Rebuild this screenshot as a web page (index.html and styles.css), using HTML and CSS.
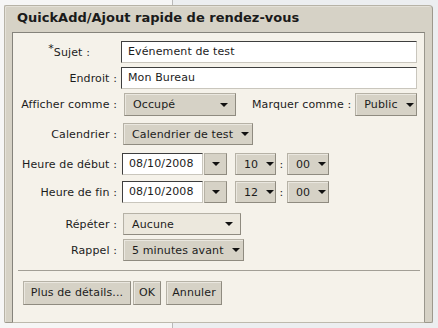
FILE: index.html
```html
<!DOCTYPE html>
<html lang="fr">
<head>
<meta charset="utf-8">
<title>QuickAdd</title>
<link rel="stylesheet" href="styles.css">
</head>
<body>
<div class="dialog">
  <div class="title">QuickAdd/Ajout rapide de rendez-vous</div>
  <div class="panel">
    <div class="row r1">
      <span class="lbl lbl-sujet"><sup class="req">*</sup>Sujet :</span>
      <span class="input wide">Evénement de test</span>
    </div>
    <div class="row r2">
      <span class="lbl">Endroit :</span>
      <span class="input wide">Mon Bureau</span>
    </div>
    <div class="row r3">
      <span class="lbl">Afficher comme :</span>
      <span class="select w-show">Occupé<i class="arr"></i></span>
      <span class="mark">Marquer comme :</span>
      <span class="select w-pub">Public<i class="arr"></i></span>
    </div>
    <div class="row r4">
      <span class="lbl">Calendrier :</span>
      <span class="select w-cal">Calendrier de test<i class="arr"></i></span>
    </div>
    <div class="row r5">
      <span class="lbl">Heure de début :</span>
      <span class="input date">08/10/2008</span>
      <span class="dbtn"><i class="arr"></i></span>
      <span class="select w-h">10<i class="arr"></i></span>
      <span class="colon">:</span>
      <span class="select w-m">00<i class="arr"></i></span>
    </div>
    <div class="row r6">
      <span class="lbl">Heure de fin :</span>
      <span class="input date">08/10/2008</span>
      <span class="dbtn"><i class="arr"></i></span>
      <span class="select w-h">12<i class="arr"></i></span>
      <span class="colon">:</span>
      <span class="select w-m">00<i class="arr"></i></span>
    </div>
    <div class="row r7">
      <span class="lbl">Répéter :</span>
      <span class="select w-rep light">Aucune<i class="arr"></i></span>
    </div>
    <div class="row r8">
      <span class="lbl">Rappel :</span>
      <span class="select w-rap">5 minutes avant<i class="arr"></i></span>
    </div>
    <div class="sep"></div>
    <div class="buttons">
      <span class="btn b-more">Plus de détails...</span>
      <span class="btn b-ok">OK</span>
      <span class="btn b-cancel">Annuler</span>
    </div>
  </div>
</div>
</body>
</html>
```
FILE: styles.css
```css
html, body {
  margin: 0;
  padding: 0;
}
body {
  width: 438px;
  height: 328px;
  overflow: hidden;
  font-family: "DejaVu Sans", Verdana, sans-serif;
  font-size: 11px;
  letter-spacing: 0.12px;
  color: #1c1c1c;
  background: linear-gradient(to right, #f6f6f6 0 172px, #b9b9b9 172px 173px, #eceef0 173px);
}
.dialog {
  margin: 5px 0 0 4px;
  width: 427px;
  height: 316px;
  background: #d6d2c6;
  border: 1px solid #b7b3a7;
  border-right-color: #9d998d;
  border-bottom-color: #9d998d;
  border-radius: 2px 4px 2px 2px;
  box-shadow: inset 1px 1px 0 #e4e1d8;
}
.title {
  height: 26px;
  padding-left: 12px;
  font-weight: bold;
  font-size: 13px;
  letter-spacing: 0;
  line-height: 24px;
  color: #1a1a1a;
}
.panel {
  margin-left: 7px;
  width: 411px;
  height: 281px;
  background: #f5f2ea;
  border: 1px solid #85837b;
  border-right-color: #9a978d;
  border-bottom-color: #bdb9ad;
  padding-top: 8px;
  box-sizing: content-box;
}
.row {
  display: flex;
  align-items: center;
  height: 22px;
}
.r2 { margin-top: 4px; }
.r3 { margin-top: 4px; height: 23px; }
.r4 { margin-top: 7px; }
.r5 { margin-top: 8px; }
.r6 { margin-top: 6px; }
.r7 { margin-top: 10px; }
.r8 { margin-top: 4px; }
.lbl {
  width: 104px;
  flex: none;
  text-align: right;
  margin-right: 4px;
  white-space: nowrap;
}
.lbl-sujet {
  box-sizing: border-box;
  padding-right: 27px;
}
.req {
  font-size: 11px;
  vertical-align: 4px;
  line-height: 0;
}
.input {
  box-sizing: border-box;
  height: 22px;
  background: #fff;
  border: 1px solid #3e3e3e;
  border-right-color: #c9c6bd;
  border-bottom-color: #c9c6bd;
  padding: 0 6px;
  line-height: 20px;
  white-space: nowrap;
}
.wide { width: 296px; }
.date { width: 81px; margin-left: 1px; padding-left: 6px; }
.select {
  box-sizing: border-box;
  display: inline-flex;
  align-items: center;
  justify-content: space-between;
  height: 22px;
  background: #d6d2c6;
  border: 1px solid #b6b2a6;
  border-right-color: #8f8b80;
  border-bottom-color: #8f8b80;
  box-shadow: inset 1px 1px 0 #eae7df;
  padding: 0 7px 0 8px;
  white-space: nowrap;
}
.select.light { background: #ece8dd; }
.arr {
  display: inline-block;
  width: 0;
  height: 0;
  border-left: 4px solid transparent;
  border-right: 4px solid transparent;
  border-top: 4px solid #111;
  margin-left: 8px;
}
.w-show { width: 112px; margin-left: 3px; height: 23px; }
.w-pub { width: 62px; margin-left: 4px; height: 23px; }
.mark { margin-left: 16px; white-space: nowrap; }
.w-cal { width: 130px; margin-left: 2px; }
.dbtn {
  box-sizing: border-box;
  display: inline-flex;
  align-items: center;
  justify-content: center;
  width: 23px;
  height: 22px;
  margin-left: 1px;
  background: #d6d2c6;
  border: 1px solid #b6b2a6;
  border-right-color: #8f8b80;
  border-bottom-color: #8f8b80;
}
.dbtn .arr { margin-left: 0; }
.w-h { width: 41px; margin-left: 8px; }
.w-m { width: 42px; }
.colon { width: 11px; text-align: center; }
.w-rep { width: 118px; margin-left: 2px; }
.w-rap { width: 121px; margin-left: 2px; }
.sep {
  margin: 9px 4px 0 5px;
  height: 0;
  border-top: 1px solid #a29f96;
}
.buttons {
  display: flex;
  margin-top: 10px;
  margin-left: 10px;
}
.btn {
  box-sizing: border-box;
  height: 24px;
  line-height: 22px;
  text-align: center;
  background: #d6d2c6;
  border: 1px solid #b6b2a6;
  border-right-color: #8f8b80;
  border-bottom-color: #8f8b80;
  box-shadow: inset 1px 1px 0 #eae7df;
  white-space: nowrap;
}
.b-more { width: 108px; }
.b-ok { width: 28px; margin-left: 2px; }
.b-cancel { width: 56px; margin-left: 5px; }
```
